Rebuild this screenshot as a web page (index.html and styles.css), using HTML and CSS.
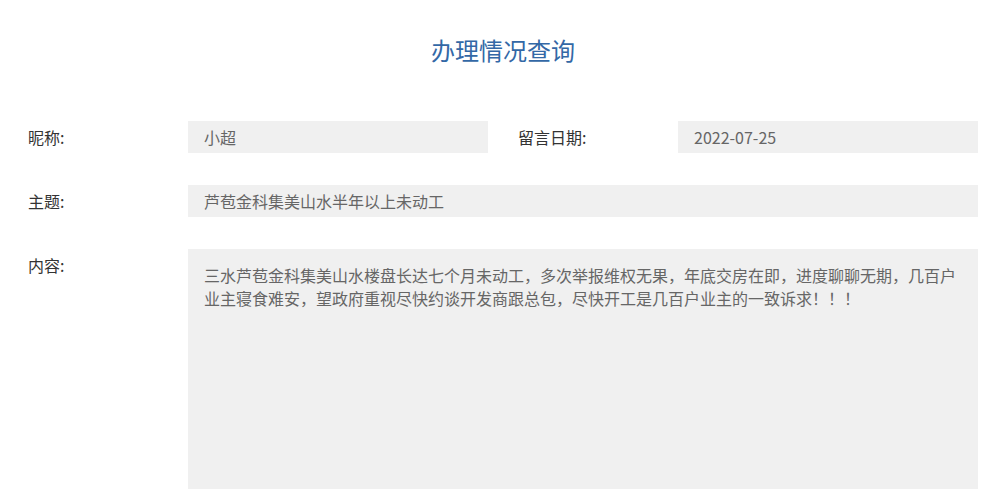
FILE: index.html
```html
<!DOCTYPE html>
<html lang="zh-CN">
<head>
    <meta charset="UTF-8">
    <meta name="viewport" content="width=device-width, initial-scale=1.0">
    <title>办理情况查询</title>
    <link rel="stylesheet" href="styles.css">
</head>
<body>
    <div class="query-container">
        <h1 class="query-title">办理情况查询</h1>

        <div class="form-row">
            <div class="form-item">
                <label class="form-label">昵称:</label>
                <div class="form-field short">小超</div>
            </div>
            <div class="form-item">
                <label class="form-label">留言日期:</label>
                <div class="form-field short">2022-07-25</div>
            </div>
        </div>

        <div class="form-row">
            <div class="form-item full">
                <label class="form-label">主题:</label>
                <div class="form-field">芦苞金科集美山水半年以上未动工</div>
            </div>
        </div>

        <div class="form-row">
            <div class="form-item full">
                <label class="form-label">内容:</label>
                <div class="form-field textarea">三水芦苞金科集美山水楼盘长达七个月未动工，多次举报维权无果，年底交房在即，进度聊聊无期，几百户业主寝食难安，望政府重视尽快约谈开发商跟总包，尽快开工是几百户业主的一致诉求！！！</div>
            </div>
        </div>
    </div>
</body>
</html>
```

FILE: styles.css
```css
* {
    margin: 0;
    padding: 0;
    box-sizing: border-box;
}

body {
    font-family: "Microsoft YaHei", "Noto Sans CJK SC", sans-serif;
    background: #ffffff;
    color: #333333;
    font-size: 16px;
}

.query-container {
    padding: 30px 18px 0 28px;
}

.query-title {
    text-align: center;
    font-size: 24px;
    font-weight: normal;
    line-height: 40px;
    color: #3368a6;
    margin-bottom: 51px;
}

.form-row {
    display: flex;
    gap: 30px;
    margin-bottom: 32px;
}

.form-item {
    display: flex;
    width: 460px;
}

.form-item.full {
    width: 950px;
}

.form-label {
    width: 160px;
    flex-shrink: 0;
    line-height: 32px;
    color: #333333;
}

.form-field {
    flex: 1;
    background: #f0f0f0;
    color: #666666;
    line-height: 32px;
    height: 32px;
    padding: 0 16px;
}

.form-field.short {
    width: 300px;
}

.form-field.textarea {
    height: 240px;
    line-height: 23px;
    padding: 15px 16px;
}
```
